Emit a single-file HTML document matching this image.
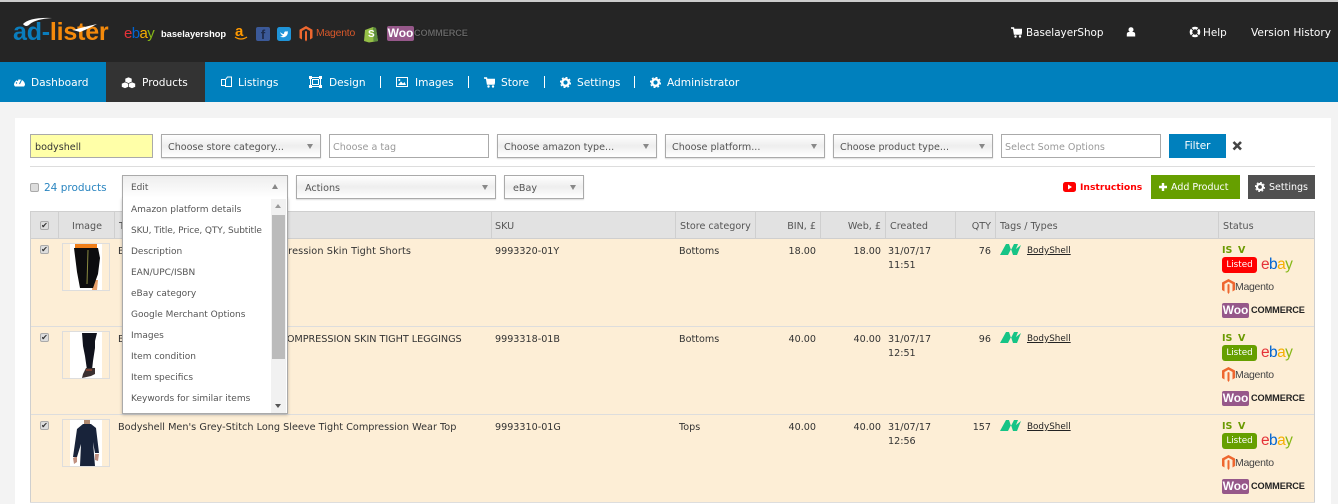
<!DOCTYPE html>
<html><head><meta charset="utf-8"><style>
html,body{margin:0;padding:0}
body{width:1338px;height:504px;overflow:hidden;position:relative;background:#f3f3f3;font-family:"DejaVu Sans","Liberation Sans",sans-serif;font-size:9.6px;color:#444}
div,span,a,svg{position:absolute;white-space:nowrap;box-sizing:border-box}
span.i{position:static}
.n{color:#fff;font-size:10.6px;top:76px;line-height:14px}
.wt{color:#fff;font-size:10.4px;top:26px;line-height:14px}
.sel{height:24px;border:1px solid #aaa;background:linear-gradient(#fff,#eee 50%,#fff);line-height:26px;padding-left:6px;color:#555;box-shadow:0 1px 1px #ddd}
.sel:after{content:"";position:absolute;right:7px;top:9px;border:3.5px solid transparent;border-top:5px solid #888;border-bottom:0}
.inp{height:24px;border:1px solid #aaa;background:#fff;line-height:26px;padding-left:3px;color:#999}
.btn{color:#fff;text-align:center;line-height:26px;height:24px;top:175px}
.v{top:212px;width:1px;height:290px;background:#cfcfcf}
.th{top:220px;line-height:14px;color:#555}
.td{line-height:14px;color:#333}
.r{text-align:right}
.mi{left:131px;color:#555;line-height:14px;font-size:9px}
.cb{width:9px;height:9px;border:1px solid #aaa;border-radius:2px;background:#ddd;color:#333;font-size:8px;line-height:7px;text-align:center}
.thumb{left:62px;width:48px;height:48px;border:1px solid #ddd;background:#fdeed6}
.ebay{font:11.5px "Liberation Sans",sans-serif;letter-spacing:-.6px}
.woo{height:15px;width:27px;background:#96588a;color:#fff;font:bold 12px/15px "Liberation Sans",sans-serif;text-align:center;border-radius:2px}
.com{font:bold 9.2px/15px "Liberation Sans",sans-serif;color:#222;letter-spacing:-.1px}
.mag{font:10.5px/14px "Liberation Sans",sans-serif;color:#444;letter-spacing:-.3px}
.lst{width:35px;height:16px;border-radius:3px;color:#fff;text-align:center;line-height:17px;font-size:8.8px}
.is{color:#6a9a00;font-weight:bold;font-size:9.5px;line-height:12px}
.tag{color:#222;text-decoration:underline;left:1027px;font-size:8.8px;line-height:14px}
</style></head><body>
<div style="left:0;top:0;width:1338px;height:62px;background:#252525;border-top:2px solid #ccc"></div>
<div style="left:0;top:62px;width:1338px;height:40px;background:#0080bd"></div>
<div style="left:106px;top:62px;width:99px;height:40px;background:#333"></div>

<!-- logo -->
<div style="left:13px;top:17px;font:bold 25px/30px 'Liberation Sans',sans-serif;letter-spacing:-.2px;color:#f58a0b"><span class="i" style="color:#0a7dbd">ad-</span>lister</div>
<svg style="left:0;top:0" width="120" height="50"><path d="M23 24Q30 17 52 18Q36 19 30 24Q26 28 23 24ZM73 30Q84 27 97 24Q88 29 80 32Z" fill="#fff"/></svg>
<div class="ebay" style="left:124px;top:25px;font-size:15px;line-height:17px"><span class="i" style="color:#e53238">e</span><span class="i" style="color:#0064d2">b</span><span class="i" style="color:#f5af02">a</span><span class="i" style="color:#86b817">y</span></div>
<div style="left:161px;top:27px;color:#fff;font:bold 9.3px/14px 'Liberation Sans',sans-serif">baselayershop</div>
<div style="left:235px;top:23px;color:#f90;font:bold 15px/17px 'Liberation Sans',sans-serif">a</div>
<svg style="left:234px;top:36px" width="15" height="6"><path d="M1 1Q7 5 13 1" stroke="#f90" stroke-width="1.3" fill="none"/></svg>
<div style="left:256px;top:27px;width:14px;height:14px;background:#3b5998;border-radius:2px;color:#1e2b4a;font:bold 13px/15px 'Liberation Sans',sans-serif;text-align:center">f</div>
<svg style="left:277px;top:27px" width="15" height="14"><rect width="14" height="14" rx="2.5" fill="#1f94d8"/><path d="M3 5q2 2 4 2q0-3 2.500-2.500l1.500-.5l-.7 1.200l.7 0q-.500 4-4 5q-2 .3-4-.7q2 0 3-1q-2-.5-3-3.500z" fill="#fff"/></svg>
<svg style="left:299px;top:26px" width="14" height="16"><path d="M7 0L13.500 3.700V12L11 13.500V5L7 2.700L3 5V13.500L.5 12V3.700ZM6 5.500L7 5L8 5.500V14L7 15.500L6 14Z" fill="#ee672f"/></svg>
<div style="left:316px;top:27px;color:#d8582a;font:10.4px/14px 'Liberation Sans',sans-serif;letter-spacing:-.2px">Magento</div>
<svg style="left:364px;top:26px" width="15" height="17"><path d="M1 4L9 1L12 2L14 15L5 16.500L0 15Z" fill="#95bf47"/><path d="M9 1L12 2L14 15L9.500 16Z" fill="#5e8e3e"/></svg>
<div style="left:368px;top:29px;color:#fff;font:bold 10px/12px 'Liberation Sans',sans-serif">S</div>
<div class="woo" style="left:387px;top:26px;width:27px">Woo</div>
<div style="left:414px;top:27px;color:#666;font:bold 9.2px/13px 'Liberation Sans',sans-serif;letter-spacing:-.1px;text-shadow:0 0 1px #000">COMMERCE</div>

<!-- top right -->
<svg style="left:1011px;top:27px" width="11" height="11"><path d="M0 1H2.500L3.500 7H10L11 2.500H3" stroke="#fff" stroke-width="1.400" fill="#fff"/><circle cx="4.500" cy="9.500" r="1.200" fill="#fff"/><circle cx="9" cy="9.500" r="1.200" fill="#fff"/></svg>
<div class="wt" style="left:1026px">BaselayerShop</div>
<svg style="left:1126px;top:27px" width="10" height="10"><circle cx="5" cy="2.700" r="2.500" fill="#fff"/><path d="M.8 9.500V7Q1 5 3 5H7Q9 5 9.200 7V9.500Z" fill="#fff"/></svg>
<svg style="left:1189px;top:26px" width="12" height="12"><circle cx="6" cy="6" r="4" fill="none" stroke="#fff" stroke-width="2.600"/><path d="M2 2L4 4M10 2L8 4M2 10L4 8M10 10L8 8" stroke="#252525" stroke-width="1"/></svg>
<div class="wt" style="left:1203px">Help</div>
<div class="wt" style="left:1251px;font-size:10.6px">Version History</div>

<!-- nav -->
<svg style="left:14px;top:77px" width="11" height="10"><path d="M0 8A5.500 5.500 0 1 1 11 8L10 9.500H1Z" fill="#fff"/><path d="M5.500 7L7.500 3" stroke="#0080bd"/><circle cx="2.500" cy="6" r=".7" fill="#0080bd"/><circle cx="3.500" cy="3.300" r=".7" fill="#0080bd"/></svg>
<div class="n" style="left:31px">Dashboard</div>
<svg style="left:121px;top:76px" width="15" height="13" fill="#fff" stroke="#333" stroke-width=".6"><path d="M4 2.500L7.500 1L11 2.500V6L7.500 7.500L4 6Z"/><path d="M.5 7.500L4 6L7.500 7.500V11L4 12.500L.5 11Z"/><path d="M7.500 7.500L11 6L14.500 7.500V11L11 12.500L7.500 11Z"/></svg>
<div class="n" style="left:142px">Products</div>
<svg style="left:221px;top:76px" width="12" height="12" fill="none" stroke="#fff"><rect x=".5" y="3.500" width="6" height="6"/><path d="M4.500 3.500L6.500 1H10.500V10.500H4.500Z" fill="#0080bd"/></svg>
<div class="n" style="left:238px">Listings</div>
<svg style="left:309px;top:76px" width="13" height="12" fill="none" stroke="#fff"><rect x="1.500" y="1.500" width="10" height="9"/><rect x="3.500" y="3.500" width="6" height="5"/><rect x="0" y="0" width="3" height="3" fill="#fff" stroke="none"/><rect x="10" y="0" width="3" height="3" fill="#fff" stroke="none"/><rect x="0" y="9" width="3" height="3" fill="#fff" stroke="none"/><rect x="10" y="9" width="3" height="3" fill="#fff" stroke="none"/></svg>
<div class="n" style="left:329px">Design</div>
<div style="left:380px;top:76px;width:1px;height:12px;background:#fff"></div>
<svg style="left:396px;top:77px" width="12" height="10"><rect x=".5" y=".5" width="11" height="9" fill="none" stroke="#fff"/><path d="M2 8L5 4.500L7 6.500L8.500 5L10 8Z" fill="#fff"/><circle cx="3.300" cy="3" r="1" fill="#fff"/></svg>
<div class="n" style="left:415px">Images</div>
<div style="left:468px;top:76px;width:1px;height:12px;background:#fff"></div>
<svg style="left:484px;top:77px" width="11" height="11"><path d="M0 1H2.500L3.500 7H10L11 2.500H3" stroke="#fff" stroke-width="1.400" fill="#fff"/><circle cx="4.500" cy="9.500" r="1.200" fill="#fff"/><circle cx="9" cy="9.500" r="1.200" fill="#fff"/></svg>
<div class="n" style="left:501px">Store</div>
<div style="left:544px;top:76px;width:1px;height:12px;background:#fff"></div>
<svg style="left:560px;top:77px" width="11" height="11"><circle cx="5.500" cy="5.500" r="3.300" fill="none" stroke="#fff" stroke-width="2.400"/><circle cx="5.500" cy="5.500" r="5" fill="none" stroke="#fff" stroke-width="1.200" stroke-dasharray="2 1.900"/></svg>
<div class="n" style="left:577px">Settings</div>
<div style="left:634px;top:76px;width:1px;height:12px;background:#fff"></div>
<svg style="left:650px;top:77px" width="11" height="11"><circle cx="5.500" cy="5.500" r="3.300" fill="none" stroke="#fff" stroke-width="2.400"/><circle cx="5.500" cy="5.500" r="5" fill="none" stroke="#fff" stroke-width="1.200" stroke-dasharray="2 1.900"/></svg>
<div class="n" style="left:667px">Administrator</div>

<!-- panel -->
<div style="left:15px;top:118px;width:1316px;height:386px;background:#fff"></div>

<div class="inp" style="left:30px;top:134px;width:123px;background:#ffffa8;color:#333;padding-left:4px">bodyshell</div>
<div class="sel" style="left:161px;top:134px;width:160px">Choose store category...</div>
<div class="inp" style="left:329px;top:134px;width:160px">Choose a tag</div>
<div class="sel" style="left:497px;top:134px;width:160px">Choose amazon type...</div>
<div class="sel" style="left:665px;top:134px;width:160px">Choose platform...</div>
<div class="sel" style="left:833px;top:134px;width:160px">Choose product type...</div>
<div class="inp" style="left:1001px;top:134px;width:160px">Select Some Options</div>
<div class="btn" style="left:1169px;top:134px;width:57px;background:#0080bd;font-size:10.5px;line-height:24px">Filter</div>
<svg style="left:1232px;top:141px" width="11" height="10"><path d="M1.500 1L9 8.500M9 1L1.500 8.500" stroke="#444" stroke-width="2.600"/></svg>
<div style="left:30px;top:166px;width:1285px;height:1px;background:#ddd"></div>

<div class="cb" style="left:30px;top:183px"></div>
<div style="left:44px;top:181px;color:#2a85c0;font-size:10.5px;line-height:14px">24 products</div>
<div class="sel" style="left:122px;top:175px;width:166px;padding-left:8px">Edit</div>
<div class="sel" style="left:296px;top:175px;width:200px;padding-left:8px">Actions</div>
<div class="sel" style="left:504px;top:175px;width:80px;padding-left:8px">eBay</div>

<svg style="left:1063px;top:182px" width="13" height="10"><rect width="13" height="10" rx="2.500" fill="#f00"/><path d="M5 2.500L9 5L5 7.500Z" fill="#fff"/></svg>
<div style="left:1080px;top:181px;color:#f00;font-weight:bold;font-size:9.2px;line-height:14px">Instructions</div>
<div class="btn" style="left:1151px;width:89px;background:#669f00"></div>
<svg style="left:1159px;top:183px" width="8" height="8"><path d="M4 0V8M0 4H8" stroke="#fff" stroke-width="2.400"/></svg>
<div style="left:1171px;top:181px;color:#fff;font-size:9.5px;line-height:14px">Add Product</div>
<div class="btn" style="left:1248px;width:67px;background:#505050"></div>
<svg style="left:1255px;top:182px" width="10" height="10"><circle cx="5" cy="5" r="3" fill="none" stroke="#fff" stroke-width="2.200"/><circle cx="5" cy="5" r="4.600" fill="none" stroke="#fff" stroke-width="1" stroke-dasharray="1.800 1.800"/></svg>
<div style="left:1269px;top:181px;color:#fff;font-size:9.5px;line-height:14px">Settings</div>

<!-- table -->
<div style="left:30px;top:211px;width:1285px;height:28px;background:#e2e2e2;border:1px solid #cfcfcf"></div>
<div style="left:30px;top:239px;width:1285px;height:87px;background:#fdeed6"></div>
<div style="left:30px;top:327px;width:1285px;height:87px;background:#fdeed6"></div>
<div style="left:30px;top:415px;width:1285px;height:87px;background:#fdeed6"></div>
<div style="left:30px;top:326px;width:1285px;height:1px;background:#ddd"></div>
<div style="left:30px;top:414px;width:1285px;height:1px;background:#ddd"></div>
<div style="left:30px;top:502px;width:1285px;height:1px;background:#ddd"></div>
<div class="v" style="left:30px"></div><div class="v" style="left:1314px"></div>
<div class="v" style="left:58px;height:27px"></div><div class="v" style="left:114px;height:27px"></div>
<div class="v" style="left:491px;height:27px"></div><div class="v" style="left:675px;height:27px"></div>
<div class="v" style="left:755px;height:27px"></div><div class="v" style="left:820px;height:27px"></div>
<div class="v" style="left:885px;height:27px"></div><div class="v" style="left:955px;height:27px"></div>
<div class="v" style="left:995px;height:27px"></div><div class="v" style="left:1218px;height:27px"></div>

<div class="cb" style="left:40px;top:221px">✔</div>
<div class="th" style="left:72px">Image</div>
<div class="th" style="left:119px">Title</div>
<div class="th" style="left:495px">SKU</div>
<div class="th" style="left:680px">Store category</div>
<div class="th r" style="right:522px">BIN, £</div>
<div class="th r" style="right:457px">Web, £</div>
<div class="th" style="left:890px">Created</div>
<div class="th r" style="right:347px">QTY</div>
<div class="th" style="left:1000px">Tags / Types</div>
<div class="th" style="left:1223px">Status</div>

<!-- row 1 -->
<div class="cb" style="left:40px;top:245px">✔</div>
<div class="thumb" style="top:243px"></div>
<svg style="left:70px;top:244px" width="32" height="46"><rect width="32" height="46" fill="#fff"/><path d="M5 0H27V5H5Z" fill="#f07f1a"/><path d="M23 36H28L27 46H22Z" fill="#e8a06a"/><path d="M4 4L28 4L30 14L28 30L23 44L10 44L7 28Z" fill="#0c0c0e"/><path d="M18 6L17 40" stroke="#8a8a40"/></svg>
<div class="td" style="left:118px;top:245px;font-size:9.7px;letter-spacing:.12px">Bodyshell Men's Gold-Stitch Compression Skin Tight Shorts</div>
<div class="td" style="left:495px;top:245px">9993320-01Y</div>
<div class="td" style="left:679px;top:245px">Bottoms</div>
<div class="td r" style="right:522px;top:245px">18.00</div>
<div class="td r" style="right:457px;top:245px">18.00</div>
<div class="td" style="left:888px;top:245px">31/07/17</div>
<div class="td" style="left:888px;top:259px">11:51</div>
<div class="td r" style="right:347px;top:245px">76</div>

<!-- row 2 -->
<div class="cb" style="left:40px;top:333px">✔</div>
<div class="thumb" style="top:331px"></div>
<svg style="left:70px;top:332px" width="32" height="46"><rect width="32" height="46" fill="#fff"/><path d="M12 1H27L25 9L25 16L23 29L22 38H17L15 24L13 14Z" fill="#10121c"/><path d="M16 36H25V42L21 44L12 46L13 42Z" fill="#3a3030"/><path d="M16 38H22" stroke="#c05030"/></svg>
<div class="td" style="left:118px;top:333px;font-size:9.7px;letter-spacing:-.05px">Bodyshell Men's Blue-Stitch Long COMPRESSION SKIN TIGHT LEGGINGS</div>
<div class="td" style="left:495px;top:333px">9993318-01B</div>
<div class="td" style="left:679px;top:333px">Bottoms</div>
<div class="td r" style="right:522px;top:333px">40.00</div>
<div class="td r" style="right:457px;top:333px">40.00</div>
<div class="td" style="left:888px;top:333px">31/07/17</div>
<div class="td" style="left:888px;top:347px">12:51</div>
<div class="td r" style="right:347px;top:333px">96</div>

<!-- row 3 -->
<div class="cb" style="left:40px;top:421px">✔</div>
<div class="thumb" style="top:419px"></div>
<svg style="left:70px;top:420px" width="32" height="46"><rect width="32" height="46" fill="#fff"/><path d="M14 0H20V6H14Z" fill="#b08a70"/><path d="M3 38L7 36L7 42L4 44ZM25 34L29 34L28 41L25 40Z" fill="#c09080"/><path d="M13 4H21L26 8L29 33H25L23 22L25 46H10L11 24L7 37H3L7 9Z" fill="#18233a"/></svg>
<div class="td" style="left:118px;top:421px;font-size:9.7px">Bodyshell Men's Grey-Stitch Long Sleeve Tight Compression Wear Top</div>
<div class="td" style="left:495px;top:421px">9993310-01G</div>
<div class="td" style="left:679px;top:421px">Tops</div>
<div class="td r" style="right:522px;top:421px">40.00</div>
<div class="td r" style="right:457px;top:421px">40.00</div>
<div class="td" style="left:888px;top:421px">31/07/17</div>
<div class="td" style="left:888px;top:435px">12:56</div>
<div class="td r" style="right:347px;top:421px">157</div>

<!-- tags -->
<svg style="left:1000px;top:243px" width="22" height="14"><path d="M0 12L6 1H9L11 7L14 1H18L16 6L21 2L17 12H13L11 6L8 12Z" fill="#16c486"/></svg>
<svg style="left:1000px;top:331px" width="22" height="14"><path d="M0 12L6 1H9L11 7L14 1H18L16 6L21 2L17 12H13L11 6L8 12Z" fill="#16c486"/></svg>
<svg style="left:1000px;top:419px" width="22" height="14"><path d="M0 12L6 1H9L11 7L14 1H18L16 6L21 2L17 12H13L11 6L8 12Z" fill="#16c486"/></svg>
<div class="tag" style="top:244px">BodyShell</div>
<div class="tag" style="top:332px">BodyShell</div>
<div class="tag" style="top:420px">BodyShell</div>

<!-- status 1 -->
<div class="is" style="left:1222px;top:245px">IS</div><div class="is" style="left:1238px;top:245px">V</div>
<div class="lst" style="left:1222px;top:257px;background:#f00">Listed</div>
<div class="ebay" style="left:1261px;top:256px;font-size:15.5px;line-height:18px"><span class="i" style="color:#e53238">e</span><span class="i" style="color:#0064d2">b</span><span class="i" style="color:#f5af02">a</span><span class="i" style="color:#86b817">y</span></div>
<svg style="left:1222px;top:279px" width="13" height="15"><path d="M6.500 0L13 3.500V11L10.500 12.500V5L6.500 2.700L2.500 5V12.500L0 11V3.500ZM5.500 5.500L6.500 5L7.500 5.500V13.500L6.500 15L5.500 13.500Z" fill="#ee672f"/></svg>
<div class="mag" style="left:1235px;top:280px">Magento</div>
<div class="woo" style="left:1222px;top:303px">Woo</div><div class="com" style="left:1251px;top:303px">COMMERCE</div>
<!-- status 2 -->
<div class="is" style="left:1222px;top:333px">IS</div><div class="is" style="left:1238px;top:333px">V</div>
<div class="lst" style="left:1222px;top:345px;background:#669f00">Listed</div>
<div class="ebay" style="left:1261px;top:344px;font-size:15.5px;line-height:18px"><span class="i" style="color:#e53238">e</span><span class="i" style="color:#0064d2">b</span><span class="i" style="color:#f5af02">a</span><span class="i" style="color:#86b817">y</span></div>
<svg style="left:1222px;top:367px" width="13" height="15"><path d="M6.500 0L13 3.500V11L10.500 12.500V5L6.500 2.700L2.500 5V12.500L0 11V3.500ZM5.500 5.500L6.500 5L7.500 5.500V13.500L6.500 15L5.500 13.500Z" fill="#ee672f"/></svg>
<div class="mag" style="left:1235px;top:368px">Magento</div>
<div class="woo" style="left:1222px;top:391px">Woo</div><div class="com" style="left:1251px;top:391px">COMMERCE</div>
<!-- status 3 -->
<div class="is" style="left:1222px;top:421px">IS</div><div class="is" style="left:1238px;top:421px">V</div>
<div class="lst" style="left:1222px;top:433px;background:#669f00">Listed</div>
<div class="ebay" style="left:1261px;top:432px;font-size:15.5px;line-height:18px"><span class="i" style="color:#e53238">e</span><span class="i" style="color:#0064d2">b</span><span class="i" style="color:#f5af02">a</span><span class="i" style="color:#86b817">y</span></div>
<svg style="left:1222px;top:455px" width="13" height="15"><path d="M6.500 0L13 3.500V11L10.500 12.500V5L6.500 2.700L2.500 5V12.500L0 11V3.500ZM5.500 5.500L6.500 5L7.500 5.500V13.500L6.500 15L5.500 13.500Z" fill="#ee672f"/></svg>
<div class="mag" style="left:1235px;top:456px">Magento</div>
<div class="woo" style="left:1222px;top:479px">Woo</div><div class="com" style="left:1251px;top:479px">COMMERCE</div>

<!-- dropdown -->
<div style="left:122px;top:198px;width:166px;height:216px;background:#fff;border:1px solid #aaa;border-top:0;box-shadow:0 1px 3px rgba(0,0,0,.25)"></div>
<div style="left:271px;top:199px;width:15px;height:214px;background:#f1f1f1"></div>
<div style="left:272px;top:215px;width:13px;height:144px;background:#bbb"></div>
<div style="left:275px;top:204px;border:3.500px solid transparent;border-bottom:4px solid #999;border-top:0"></div>
<div style="left:275px;top:404px;border:3.500px solid transparent;border-top:4px solid #555;border-bottom:0"></div>
<div style="left:123px;top:176px;width:164px;height:22px;background:linear-gradient(#eee,#fff)"></div>
<div style="left:131px;top:181px;color:#555;line-height:14px;font-size:9px">Edit</div>
<div style="left:272px;top:184px;border:3.500px solid transparent;border-bottom:5px solid #888;border-top:0"></div>
<div class="mi" style="top:203px">Amazon platform details</div>
<div class="mi" style="top:224px;letter-spacing:-.13px">SKU, Title, Price, QTY, Subtitle</div>
<div class="mi" style="top:245px">Description</div>
<div class="mi" style="top:266px">EAN/UPC/ISBN</div>
<div class="mi" style="top:287px">eBay category</div>
<div class="mi" style="top:308px">Google Merchant Options</div>
<div class="mi" style="top:329px">Images</div>
<div class="mi" style="top:350px">Item condition</div>
<div class="mi" style="top:371px">Item specifics</div>
<div class="mi" style="top:392px">Keywords for similar items</div>
</body></html>
